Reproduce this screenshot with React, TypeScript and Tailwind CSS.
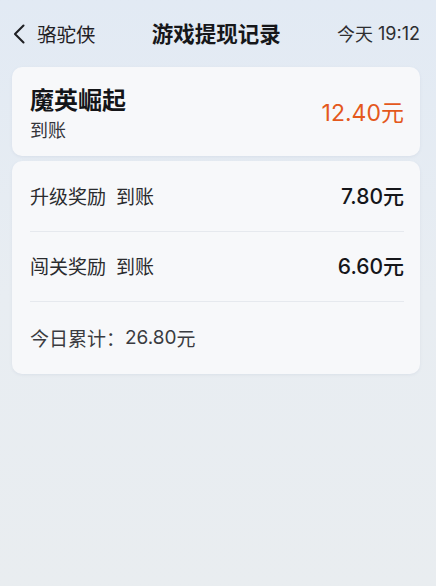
const cjk = { fontFamily: '"Noto Sans CJK SC", sans-serif' };
const num = { fontFamily: 'Inter, "Noto Sans CJK SC", sans-serif' };

function Row({ label, amount }: { label: string; amount: string }) {
  return (
    <div className="flex h-[70px] items-center justify-between border-b border-[#e6e9ee]">
      <span className="flex gap-[10px] text-[19px] text-[#2a2b2e]">
        <span>{label}</span>
        <span>到账</span>
      </span>
      <span className="text-[21px] font-medium text-[#15161a]" style={num}>
        {amount}
        <span style={cjk}>元</span>
      </span>
    </div>
  );
}

export default function App() {
  return (
    <div
      className="h-[586px] w-[436px] overflow-hidden bg-gradient-to-b from-[#e2eaf4] via-[#e8edf2] to-[#e9edf0]"
      style={cjk}
    >
      {/* Header */}
      <div className="flex h-[67px] items-center justify-between pl-[13px] pr-4">
        <div className="flex items-center gap-[12px] text-[#1f2024]">
          <svg width="12" height="20" viewBox="0 0 12 20" fill="none">
            <path d="M10.5 1.5 2 10l8.5 8.5" stroke="currentColor" strokeWidth="2.1" strokeLinecap="round" strokeLinejoin="round" />
          </svg>
          <span className="text-[19.5px]">骆驼侠</span>
        </div>
        <span className="text-[21.5px] font-bold text-[#16171a]">游戏提现记录</span>
        <span className="flex items-center gap-[5px] text-[18px] text-[#2d2e31]">
          <span>今天</span>
          <span style={num}>19:12</span>
        </span>
      </div>

      {/* Game card */}
      <div className="ml-3 mr-4 flex h-[89px] items-center justify-between rounded-[10px] bg-[#f7f8fa] pl-[18px] pr-[16px] shadow-[0_1px_3px_rgba(120,140,170,0.12)]">
        <div className="flex flex-col">
          <span className="text-[24px] font-bold leading-[35px] text-[#141518]">魔英崛起</span>
          <span className="text-[18px] leading-[26px] text-[#34353a]">到账</span>
        </div>
        <span className="mt-[2px] text-[23px] text-[#e4581c]" style={num}>
          12.40<span style={cjk}>元</span>
        </span>
      </div>

      {/* Detail card */}
      <div className="ml-3 mr-4 mt-[5px] rounded-[10px] bg-[#f7f8fa] pl-[18px] pr-[16px] pt-[1px] shadow-[0_1px_3px_rgba(120,140,170,0.12)]">
        <Row label="升级奖励" amount="7.80" />
        <Row label="闯关奖励" amount="6.60" />
        <div className="flex h-[72px] items-center text-[19px] text-[#3a3b40]">
          <span>今日累计：</span>
          <span style={num}>26.80</span>
          <span>元</span>
        </div>
      </div>
    </div>
  );
}
